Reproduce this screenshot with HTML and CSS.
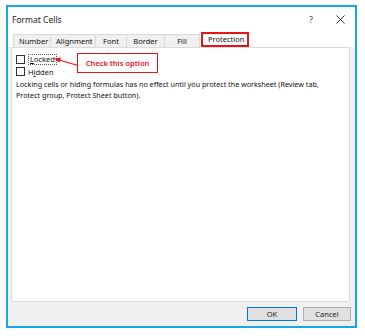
FILE: index.html
```
<!DOCTYPE html>
<html lang="en">
<head>
    <meta charset="UTF-8">
    <title>Format Cells</title>
    <link rel="stylesheet" href="styles.css">
</head>
<body>

<div class="dialog">
    <div class="titlebar">
        <span class="title">Format Cells</span>
        <span class="help">?</span>
        <svg class="close" width="9" height="9" viewBox="0 0 9 9">
            <path d="M0.5 0.5 L8.5 8.5 M8.5 0.5 L0.5 8.5" stroke="#333" stroke-width="1"/>
        </svg>
    </div>

    <div class="tabs">
        <div class="tab">Number</div>
        <div class="tab">Alignment</div>
        <div class="tab">Font</div>
        <div class="tab">Border</div>
        <div class="tab">Fill</div>
        <div class="tab active">Protection</div>
    </div>

    <div class="panel">
        <div class="check">
            <span class="box"></span>
            <span class="focus"><u>L</u>ocked</span>
        </div>
        <div class="check">
            <span class="box"></span>
            <span>H<u>i</u>dden</span>
        </div>
        <p class="note">Locking cells or hiding formulas has no effect until you protect the worksheet (Review tab, Protect group, Protect Sheet button).</p>

        <!-- annotation -->
        <div class="callout">Check this option</div>
        <svg class="arrow" width="30" height="14" viewBox="0 0 30 14">
            <path d="M25 9.5 L6 4" stroke="#e8141c" stroke-width="1.3"/>
            <path d="M1 2.5 L8 1.5 L6.5 6.5 Z" fill="#e8141c"/>
        </svg>
    </div>

    <div class="footer">
        <button class="btn ok">OK</button>
        <button class="btn">Cancel</button>
    </div>
</div>

</body>
</html>
```

FILE: styles.css
```
* { margin: 0; padding: 0; box-sizing: border-box; }
body {
    font-family: 'Noto Sans', 'Open Sans', sans-serif;
    color: #111; background: #fff;
    width: 365px; height: 336px; overflow: hidden;
}

.dialog {
    margin: 5px 0 0 6px;
    width: 351px; height: 323px;
    border: 2px solid #14a9e6;
    background: #f0f0f0;
    display: flex; flex-direction: column;
}

.titlebar {
    height: 24px; background: #fff;
    display: flex; align-items: center;
    padding: 0 10px 0 4px;
}
.titlebar .title { font-size: 8.5px; flex: 1; color: #222; }
.titlebar .help { font-size: 9px; color: #444; margin-right: 23px; }
.titlebar .close { display: block; }

.tabs {
    display: flex; align-items: flex-end;
    height: 16px; padding-left: 5px;
    background: #fff;
}
.tab {
    height: 13px; padding: 0 5px;
    font-size: 7.5px; line-height: 12px; color: #111;
    border: 1px solid #dadada; border-bottom: none;
    border-right: none;
    background: #f0f0f0;
    text-align: center;
}
.tab:nth-child(1) { width: 37px; }
.tab:nth-child(2) { width: 45px; }
.tab:nth-child(3) { width: 31px; }
.tab:nth-child(4) { width: 38px; }
.tab:nth-child(5) { width: 36px; border-right: 1px solid #dadada; }
.tab.active {
    width: 48px; height: 15px; margin-left: 1px;
    background: #fff;
    border: 2px solid #e8141c;
    line-height: 11px;
}

.panel {
    position: relative;
    flex: 1;
    margin: 0 5px 0 3px;
    background: #fff;
    border: 1px solid #dcdcdc;
    padding: 6px 4px;
}

.check {
    display: flex; align-items: center; gap: 3px;
    height: 11px; margin-bottom: 1px;
    font-size: 7.5px;
}
.check .box {
    width: 9px; height: 9px;
    border: 1px solid #333; background: #fff;
}
.check .focus {
    border: 1px dotted #555;
    padding: 0 1px; line-height: 9px;
}

.note {
    font-size: 7.2px; line-height: 11px;
    margin-top: 2px; width: 320px;
}

.callout {
    position: absolute; left: 65px; top: 5px;
    width: 81px; height: 20px;
    border: 1px solid #e8141c;
    color: #e8141c; background: #fff;
    font-size: 7.5px; font-weight: 600;
    display: flex; align-items: center; justify-content: center;
}
.arrow {
    position: absolute; left: 41px; top: 8px;
}

.footer {
    height: 24px;
    display: flex; justify-content: flex-end; align-items: center;
    gap: 6px; padding-right: 4px;
}
.btn {
    height: 14px;
    font-family: inherit; font-size: 7.5px; color: #222;
    background: #e1e1e1; border: 1px solid #adadad;
}
.btn.ok { width: 50px; border-color: #0078d7; }
.btn:last-child { width: 48px; }
```
